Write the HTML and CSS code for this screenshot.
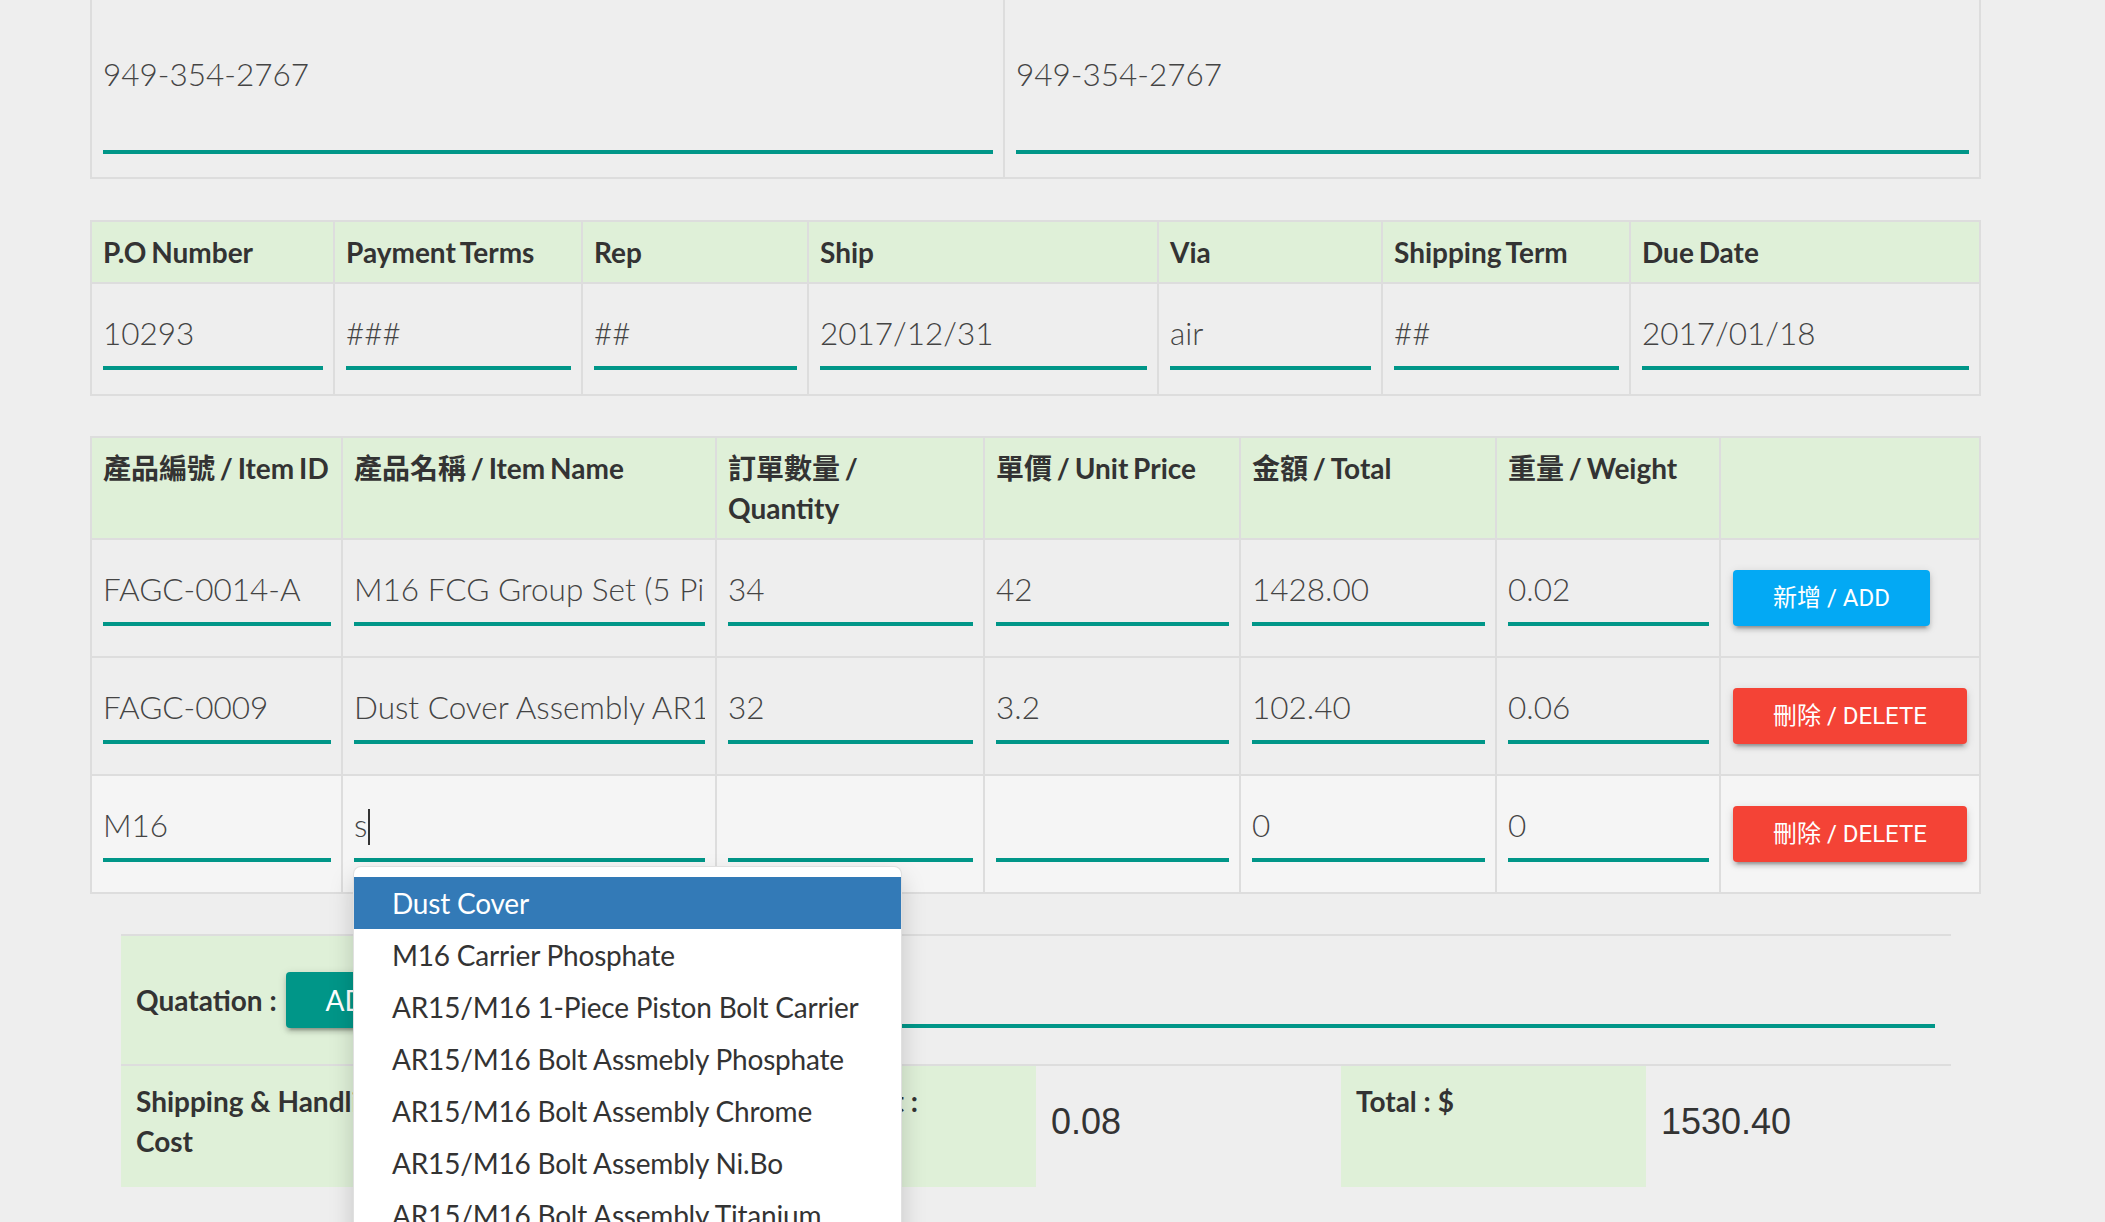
FILE: index.html
```html
<!DOCTYPE html>
<html lang="zh-Hant">
<head>
<meta charset="utf-8">
<title>Order</title>
<link rel="stylesheet" href="styles.css">
</head>
<body>
<div class="page">
  <section class="grid contact">
    <div class="cell contact-cell"><div class="field tall">949-354-2767</div></div>
    <div class="cell contact-cell"><div class="field tall">949-354-2767</div></div>
  </section>

  <section class="grid po">
    <div class="cell head">P.O Number</div>
    <div class="cell head">Payment Terms</div>
    <div class="cell head">Rep</div>
    <div class="cell head">Ship</div>
    <div class="cell head">Via</div>
    <div class="cell head">Shipping Term</div>
    <div class="cell head">Due Date</div>
    <div class="cell po-cell"><div class="field">10293</div></div>
    <div class="cell po-cell"><div class="field">###</div></div>
    <div class="cell po-cell"><div class="field">##</div></div>
    <div class="cell po-cell"><div class="field">2017/12/31</div></div>
    <div class="cell po-cell"><div class="field">air</div></div>
    <div class="cell po-cell"><div class="field">##</div></div>
    <div class="cell po-cell"><div class="field">2017/01/18</div></div>
  </section>

  <section class="grid items">
    <div class="cell head">產品編號 / Item ID</div>
    <div class="cell head">產品名稱 / Item Name</div>
    <div class="cell head">訂單數量 /<br>Quantity</div>
    <div class="cell head">單價 / Unit Price</div>
    <div class="cell head">金額 / Total</div>
    <div class="cell head">重量 / Weight</div>
    <div class="cell head"></div>

    <div class="cell item-cell"><div class="field">FAGC-0014-A</div></div>
    <div class="cell item-cell"><div class="field">M16 FCG Group Set (5 Pieces)</div></div>
    <div class="cell item-cell"><div class="field">34</div></div>
    <div class="cell item-cell"><div class="field">42</div></div>
    <div class="cell item-cell"><div class="field">1428.00</div></div>
    <div class="cell item-cell"><div class="field">0.02</div></div>
    <div class="cell act"><span class="btn btn-blue">新增 / ADD</span></div>

    <div class="cell item-cell"><div class="field">FAGC-0009</div></div>
    <div class="cell item-cell"><div class="field">Dust Cover Assembly AR15/M16</div></div>
    <div class="cell item-cell"><div class="field">32</div></div>
    <div class="cell item-cell"><div class="field">3.2</div></div>
    <div class="cell item-cell"><div class="field">102.40</div></div>
    <div class="cell item-cell"><div class="field">0.06</div></div>
    <div class="cell act"><span class="btn btn-red">刪除 / DELETE</span></div>

    <div class="cell item-cell hover"><div class="field">M16</div></div>
    <div class="cell item-cell hover">
      <div class="field-wrap">
        <div class="field">s<span class="caret"></span></div>
        <ul class="suggest">
          <li class="active">Dust Cover</li>
          <li>M16 Carrier Phosphate</li>
          <li>AR15/M16 1-Piece Piston Bolt Carrier</li>
          <li>AR15/M16 Bolt Assmebly Phosphate</li>
          <li>AR15/M16 Bolt Assembly Chrome</li>
          <li>AR15/M16 Bolt Assembly Ni.Bo</li>
          <li>AR15/M16 Bolt Assembly Titanium</li>
          <li>AR15/M16 Bolt Carrier Group</li>
        </ul>
      </div>
    </div>
    <div class="cell item-cell hover"><div class="field"></div></div>
    <div class="cell item-cell hover"><div class="field"></div></div>
    <div class="cell item-cell hover"><div class="field">0</div></div>
    <div class="cell item-cell hover"><div class="field">0</div></div>
    <div class="cell act hover"><span class="btn btn-red">刪除 / DELETE</span></div>
  </section>

  <section class="summary">
    <div class="quote-row">
      <div class="quote-label">Quatation :<span class="btn btn-teal">ADD</span></div>
      <div class="quote-input"><div class="field"></div></div>
    </div>
    <div class="totals">
      <div class="label">Shipping &amp; Handling Cost</div>
      <div class="value">0</div>
      <div class="label">Total Weight :</div>
      <div class="value">0.08</div>
      <div class="label">Total : $</div>
      <div class="value">1530.40</div>
    </div>
  </section>
</div>
</body>
</html>
```
FILE: styles.css
```css
html {
  overflow: hidden;
}

body {
  margin: 0;
  background: #eeeeee;
  font-family: Lato, "Noto Sans CJK TC", sans-serif;
  color: #333333;
}

.page {
  width: 2105px;
  height: 1222px;
  overflow: hidden;
}

.grid {
  display: grid;
  box-sizing: border-box;
  width: 1891px;
  margin-left: 90px;
  border-left: 2px solid #dddddd;
  border-top: 2px solid #dddddd;
}

.cell {
  box-sizing: border-box;
  min-width: 0;
  border-right: 2px solid #dddddd;
  border-bottom: 2px solid #dddddd;
  padding: 0 10px 0 11px;
}

.contact {
  grid-template-columns: 913px 976px;
  border-top: 0;
}

.contact-cell {
  padding-bottom: 23px;
}

.po {
  grid-template-columns: 243px 248px 226px 350px 224px 248px 350px;
  margin-top: 41px;
}

.items {
  grid-template-columns: 251px 374px 268px 256px 256px 224px 260px;
  margin-top: 40px;
}

.head {
  background: #dff0d8;
  font-weight: 700;
  font-size: 28px;
  line-height: 40px;
  padding-top: 10px;
  padding-bottom: 10px;
  padding-right: 4px;
  word-spacing: -2px;
  color: #333333;
}

.po-cell {
  padding-top: 16px;
  padding-bottom: 24px;
}

.item-cell {
  padding-top: 16px;
  padding-bottom: 30px;
}

.hover {
  background: #f5f5f5;
}

.field {
  box-sizing: content-box;
  height: 66px;
  line-height: 66px;
  border-bottom: 4px solid #009688;
  font-family: Lato, "Noto Sans CJK TC", sans-serif;
  font-weight: 300;
  font-size: 31.5px;
  color: #444444;
  white-space: nowrap;
  overflow: hidden;
  text-overflow: clip;
}

.field.tall {
  height: auto;
  line-height: 40px;
  padding: 54px 0 56px;
}

.field-wrap {
  position: relative;
}

.caret {
  display: inline-block;
  width: 0;
  height: 36px;
  border-right: 2px solid #333333;
  vertical-align: middle;
  margin-left: 1px;
  margin-top: -4px;
}

.act {
  display: flex;
  align-items: center;
  padding-left: 12px;
}

.btn {
  display: inline-block;
  height: 56px;
  line-height: 56px;
  padding: 0 40px;
  border-radius: 4px;
  font-family: Roboto, "Noto Sans CJK TC", sans-serif;
  font-weight: 400;
  font-size: 24px;
  color: #ffffff;
  white-space: nowrap;
  box-shadow: 0 4px 4px 0 rgba(0, 0, 0, 0.14), 0 2px 10px 0 rgba(0, 0, 0, 0.12), 0 6px 2px -4px rgba(0, 0, 0, 0.2);
}

.btn-blue {
  background: #03a9f4;
}

.btn-red {
  background: #f44336;
}

.btn-teal {
  background: #009688;
}

.suggest {
  position: absolute;
  top: calc(100% + 4px);
  left: -1px;
  z-index: 10;
  box-sizing: border-box;
  width: 549px;
  margin: 0;
  padding: 10px 0;
  list-style: none;
  background: #ffffff;
  border: 1px solid rgba(0, 0, 0, 0.12);
  border-radius: 8px;
  box-shadow: 0 12px 24px rgba(0, 0, 0, 0.175);
}

.suggest li {
  padding: 6px 38px;
  line-height: 40px;
  font-size: 28px;
  font-weight: 400;
  letter-spacing: -0.2px;
  color: #333333;
  white-space: nowrap;
}

.suggest li.active {
  background: #337ab7;
  color: #ffffff;
}

.summary {
  width: 1830px;
  margin: 40px 0 0 121px;
}

.quote-row {
  display: flex;
  height: 130px;
  box-sizing: border-box;
  border-top: 2px solid #dddddd;
}

.quote-label {
  box-sizing: border-box;
  width: 470px;
  display: flex;
  align-items: center;
  gap: 9px;
  padding: 0 15px;
  background: #dff0d8;
  font-weight: 700;
  font-size: 28px;
  line-height: 40px;
}

.quote-label .btn {
  font-family: Lato, sans-serif;
  font-size: 28px;
}

.quote-input {
  flex: 1;
  padding: 22px 16px 0 15px;
}

.totals {
  display: grid;
  grid-template-columns: repeat(6, 305px);
  border-top: 2px solid #dddddd;
}

.label {
  box-sizing: border-box;
  height: 121px;
  padding: 15px;
  background: #dff0d8;
  font-weight: 700;
  font-size: 28px;
  line-height: 40px;
  color: #333333;
}

.value {
  padding: 36px 15px 0;
  font-family: "Liberation Sans", Arial, sans-serif;
  font-size: 36px;
  line-height: 40px;
  color: #333333;
}
```
